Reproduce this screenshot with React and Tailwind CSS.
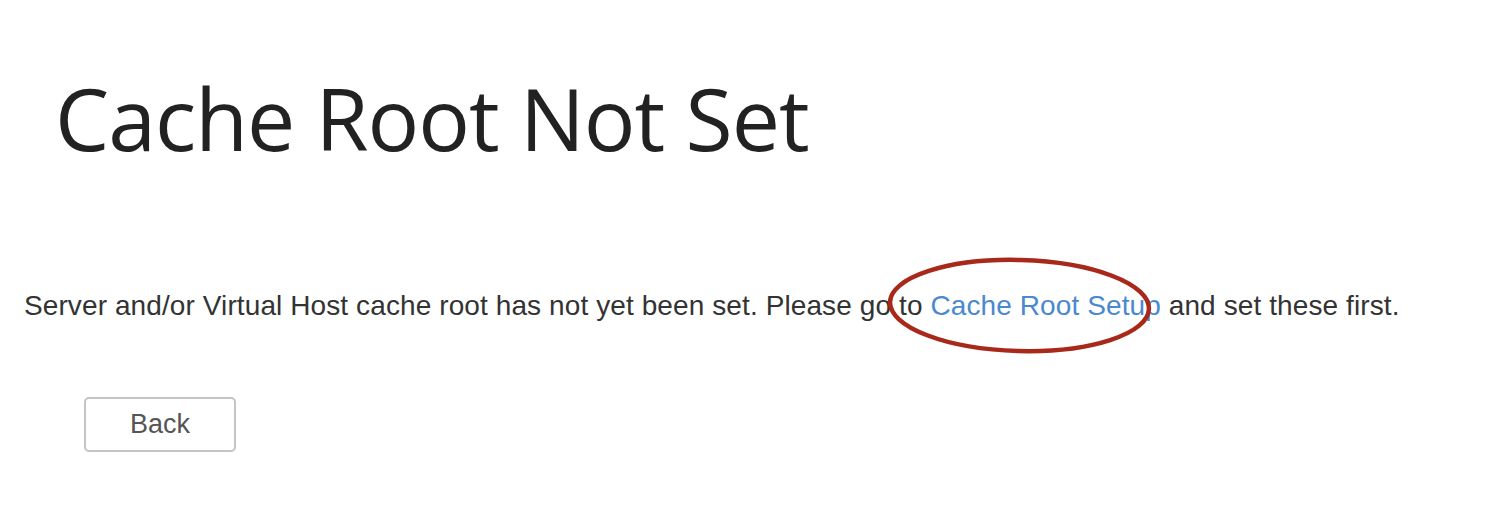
export default function App() {
  return (
    <div className="w-[1508px] h-[512px] bg-white overflow-hidden">
      <h1
        className="pl-[55px] pt-[70px] text-[86px] leading-[96px] tracking-[-1px] text-[#222222]"
        style={{ fontFamily: '"Open Sans", sans-serif' }}
      >
        Cache Root Not Set
      </h1>
      <p
        className="pl-[24px] mt-[124px] text-[28px] leading-[32px] tracking-[0.1px] text-[#333333]"
        style={{ fontFamily: '"Liberation Sans", Arial, sans-serif' }}
      >
        Server and/or Virtual Host cache root has not yet been set. Please go{" "}
        <span className="relative">
          to{" "}
          <a className="text-[#4a89cf]">Cache Root Setup</a>
          <svg
            className="absolute left-[-11px] top-[-33px] pointer-events-none"
            width="266"
            height="98"
            viewBox="0 0 266 98"
          >
            <ellipse cx="131.5" cy="48.5" rx="129.5" ry="45.5" fill="none" stroke="#a8281a" strokeWidth="4.5" transform="rotate(1.5 131.5 48.5)" />
          </svg>
        </span>{" "}
        and set these first.
      </p>
      <div className="pl-[84px] mt-[75px]">
        <button
          className="w-[152px] h-[55px] border-2 border-[#c4c4c4] rounded-[5px] text-[27px] text-[#555555] bg-white"
          style={{ fontFamily: '"Liberation Sans", Arial, sans-serif' }}
        >
          Back
        </button>
      </div>
    </div>
  );
}
